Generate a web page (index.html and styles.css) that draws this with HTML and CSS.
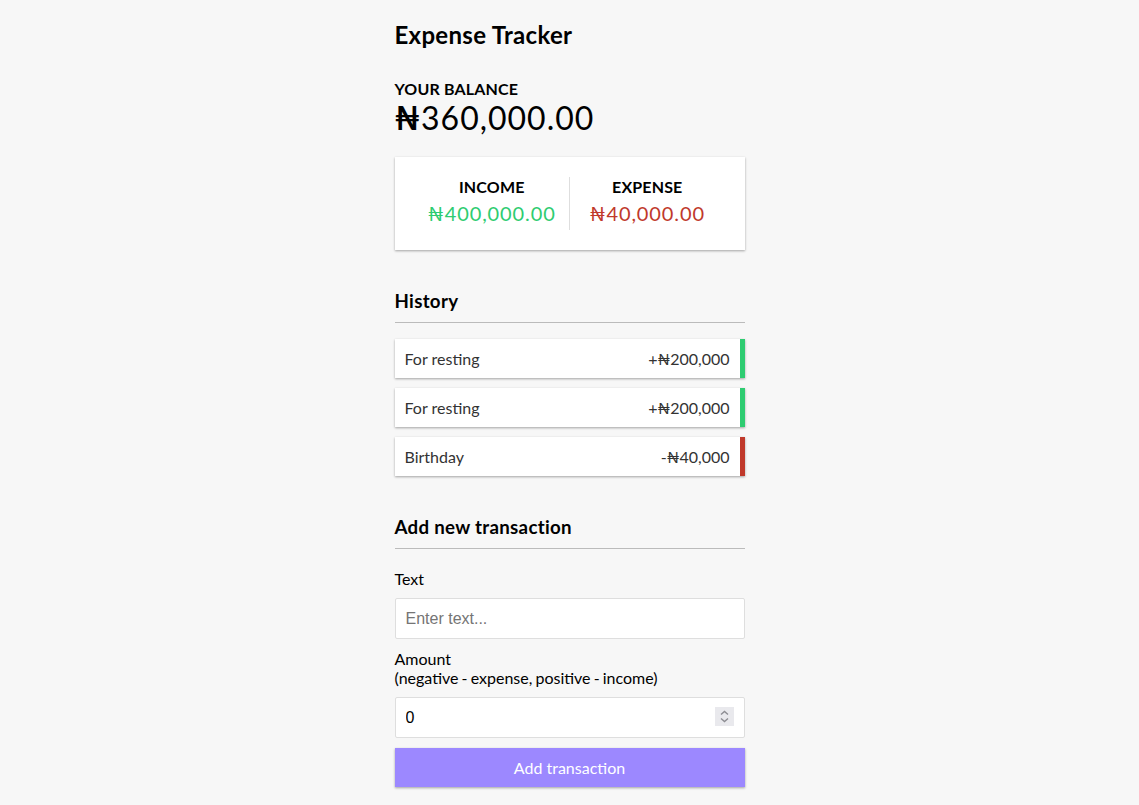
FILE: index.html
```html
<!DOCTYPE html>
<html lang="en">
<head>
<meta charset="UTF-8">
<title>Expense Tracker</title>
<link rel="stylesheet" href="styles.css">
</head>
<body>
<div class="container">
  <h2 class="title">Expense Tracker</h2>
  <h4>Your Balance</h4>
  <h1 class="balance"><span class="naira">₦</span>360,000.00</h1>
  <div class="inc-exp-container">
    <div>
      <h4>Income</h4>
      <p class="money plus">₦400,000.00</p>
    </div>
    <div>
      <h4>Expense</h4>
      <p class="money minus">₦40,000.00</p>
    </div>
  </div>
  <h3>History</h3>
  <ul class="list">
    <li class="plus">For resting <span>+₦200,000</span></li>
    <li class="plus">For resting <span>+₦200,000</span></li>
    <li class="minus">Birthday <span>-₦40,000</span></li>
  </ul>
  <h3>Add new transaction</h3>
  <form>
    <div class="form-control">
      <label for="text">Text</label>
      <input type="text" id="text" placeholder="Enter text...">
    </div>
    <div class="form-control">
      <label for="amount" class="amount-label">Amount <br>(negative - expense, positive - income)</label>
      <div class="number-wrap">
        <input type="number" id="amount" placeholder="Enter amount..." value="0">
        <span class="spinner" aria-hidden="true">
          <svg width="19" height="19" viewBox="0 0 19 19">
            <polyline points="6,7.5 9.5,4.5 13,7.5" fill="none" stroke="#8d8d93" stroke-width="1.4"/>
            <polyline points="6,11.5 9.5,14.5 13,11.5" fill="none" stroke="#8d8d93" stroke-width="1.4"/>
          </svg>
        </span>
      </div>
    </div>
    <button class="btn" type="button">Add transaction</button>
  </form>
</div>
</body>
</html>
```

FILE: styles.css
```css
* {
  box-sizing: border-box;
}

body {
  background-color: #f7f7f7;
  margin: 0;
  font-family: Lato, "Noto Sans", sans-serif;
}

.container {
  margin: 0 auto;
  width: 350px;
}

.title {
  font-size: 24px;
  letter-spacing: 0.3px;
  margin: 20px 0 30px;
}

h1 {
  letter-spacing: 1px;
  margin: 0;
  font-size: 32px;
  font-weight: 400;
}

.naira {
  font-weight: 700;
}

h3 {
  font-size: 18.72px;
  letter-spacing: 0.3px;
  border-bottom: 1px solid #bbb;
  padding-bottom: 10px;
  margin: 40px 0 10px;
}

h4 {
  font-size: 16px;
  letter-spacing: 0.15px;
  margin: 0;
  text-transform: uppercase;
}

.inc-exp-container {
  background-color: #fff;
  box-shadow: 0 1px 3px rgba(0, 0, 0, 0.12), 0 1px 2px rgba(0, 0, 0, 0.24);
  padding: 20px;
  display: flex;
  justify-content: space-between;
  margin: 20px 0;
}

.inc-exp-container > div {
  flex: 1;
  text-align: center;
}

.inc-exp-container > div:first-of-type {
  border-right: 1px solid #dedede;
}

.money {
  font-size: 20px;
  letter-spacing: 0.9px;
  margin: 5px 0;
}

.money.plus {
  color: #2ecc71;
}

.money.minus {
  color: #c0392b;
}

label {
  display: inline-block;
  margin: 10px 0;
}

.amount-label {
  word-spacing: -1px;
}

input[type='text'],
input[type='number'] {
  border: 1px solid #dedede;
  border-radius: 2px;
  display: block;
  font-size: 16px;
  line-height: 19.2px;
  height: 41px;
  font-family: "Liberation Sans", Arial, sans-serif;
  padding: 10px;
  width: 100%;
  background: #fff;
  color: #000;
}

input[type='number']::-webkit-inner-spin-button,
input[type='number']::-webkit-outer-spin-button {
  -webkit-appearance: none;
  margin: 0;
}

.number-wrap {
  position: relative;
}

.spinner {
  position: absolute;
  top: 10px;
  right: 11px;
  width: 19px;
  height: 19px;
  background: #e9e9ed;
  display: flex;
}

.btn {
  cursor: pointer;
  background-color: #9c88ff;
  box-shadow: 0 1px 3px rgba(0, 0, 0, 0.12), 0 1px 2px rgba(0, 0, 0, 0.24);
  color: #fff;
  border: 0;
  display: block;
  font-size: 16px;
  font-family: inherit;
  margin: 10px 0 30px;
  padding: 10px;
  width: 100%;
}

.list {
  list-style-type: none;
  padding: 0;
  margin: 16px 0 40px;
}

.list li {
  background-color: #fff;
  box-shadow: 0 1px 3px rgba(0, 0, 0, 0.12), 0 1px 2px rgba(0, 0, 0, 0.24);
  color: #333;
  display: flex;
  justify-content: space-between;
  position: relative;
  padding: 10px;
  margin: 10px 0;
}

.list li.plus {
  border-right: 5px solid #2ecc71;
}

.list li.minus {
  border-right: 5px solid #c0392b;
}
```
